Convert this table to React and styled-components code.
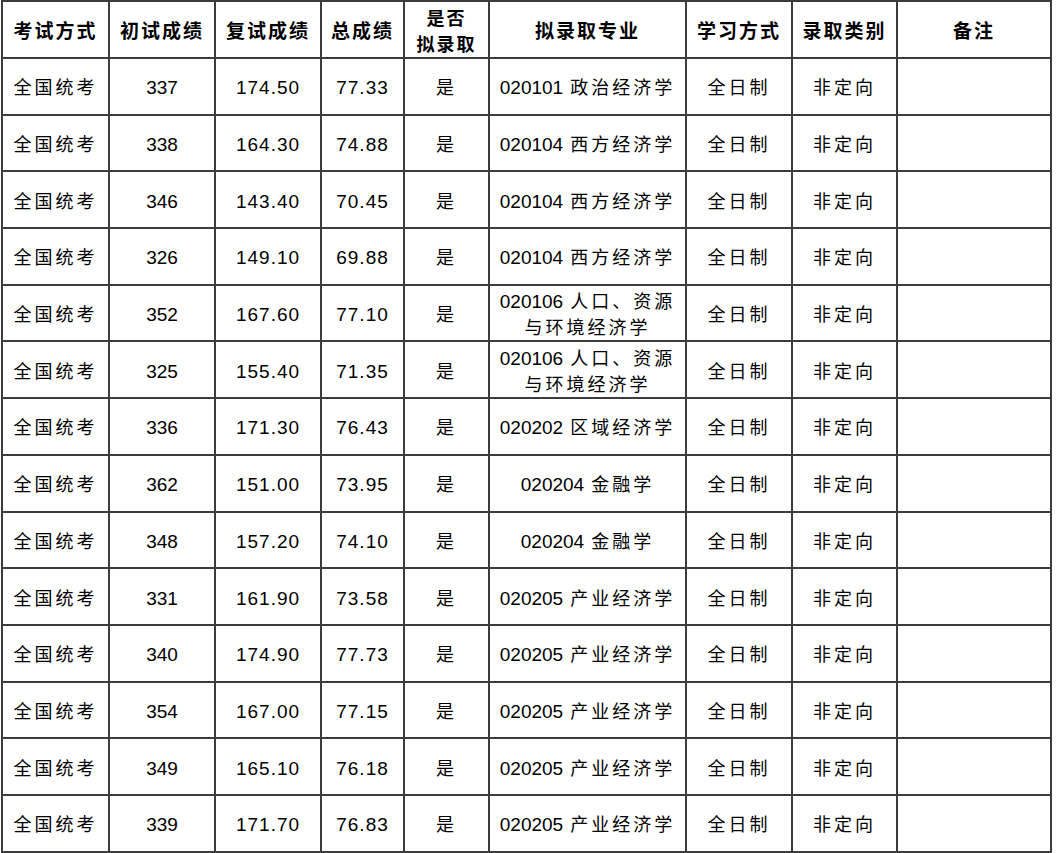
import styled, { createGlobalStyle } from "styled-components";

const GlobalStyle = createGlobalStyle`
  html, body {
    margin: 0;
    padding: 0;
    background: #fff;
  }
`;

const widths = [107, 106, 106, 83, 85, 197, 106, 105, 154];

const headers = [
  ["考试方式"],
  ["初试成绩"],
  ["复试成绩"],
  ["总成绩"],
  ["是否", "拟录取"],
  ["拟录取专业"],
  ["学习方式"],
  ["录取类别"],
  ["备注"],
];

const rows = [
  ["337", "174.50", "77.33", ["020101 政治经济学"]],
  ["338", "164.30", "74.88", ["020104 西方经济学"]],
  ["346", "143.40", "70.45", ["020104 西方经济学"]],
  ["326", "149.10", "69.88", ["020104 西方经济学"]],
  ["352", "167.60", "77.10", ["020106 人口、资源", "与环境经济学"]],
  ["325", "155.40", "71.35", ["020106 人口、资源", "与环境经济学"]],
  ["336", "171.30", "76.43", ["020202 区域经济学"]],
  ["362", "151.00", "73.95", ["020204 金融学"]],
  ["348", "157.20", "74.10", ["020204 金融学"]],
  ["331", "161.90", "73.58", ["020205 产业经济学"]],
  ["340", "174.90", "77.73", ["020205 产业经济学"]],
  ["354", "167.00", "77.15", ["020205 产业经济学"]],
  ["349", "165.10", "76.18", ["020205 产业经济学"]],
  ["339", "171.70", "76.83", ["020205 产业经济学"]],
];

// split a major like "020101 政治经济学" so the code uses the latin face
function Major({ lines }) {
  return lines.map((line, i) => {
    const m = line.match(/^(\d+)(.*)$/);
    return (
      <Line key={i}>
        {m ? (
          <>
            <Num>{m[1]}</Num>
            <Han>{m[2]}</Han>
          </>
        ) : (
          <Han>{line}</Han>
        )}
      </Line>
    );
  });
}

export default function App() {
  return (
    <>
      <GlobalStyle />
      <Page>
        <Table>
          <colgroup>
            {widths.map((w, i) => (
              <col key={i} style={{ width: w }} />
            ))}
          </colgroup>
          <thead>
            <tr>
              {headers.map((h, i) => (
                <Th key={i}>
                  {h.map((t, j) => (
                    <HeadLine key={j} $tight={h.length > 1}>
                      {t}
                    </HeadLine>
                  ))}
                </Th>
              ))}
            </tr>
          </thead>
          <tbody>
            {rows.map((r, i) => (
              <Row key={i}>
                <Td>
                  <Han>全国统考</Han>
                </Td>
                <Td>
                  <Num>{r[0]}</Num>
                </Td>
                <Td>
                  <Num $spaced>{r[1]}</Num>
                </Td>
                <Td>
                  <Num $spaced>{r[2]}</Num>
                </Td>
                <Td>
                  <Han>是</Han>
                </Td>
                <Td>
                  <Major lines={r[3]} />
                </Td>
                <Td>
                  <Han>全日制</Han>
                </Td>
                <Td>
                  <Han>非定向</Han>
                </Td>
                <Td />
              </Row>
            ))}
          </tbody>
        </Table>
      </Page>
    </>
  );
}

const Page = styled.div`
  padding: 0 0 0 1px;
  width: 1058px;
  height: 853px;
  box-sizing: border-box;
  overflow: hidden;
`;

const Table = styled.table`
  border-collapse: collapse;
  table-layout: fixed;
  width: 1051px;
  color: #000;
`;

const Th = styled.th`
  height: 55px;
  padding: 0;
  border: 2px solid #3c3c3c;
  text-align: center;
  vertical-align: middle;
  font-family: "Noto Sans CJK SC", sans-serif;
  font-weight: 700;
  font-size: 19px;
  letter-spacing: 2px;
`;

const HeadLine = styled.div`
  font-size: ${(p) => (p.$tight ? "18px" : "19px")};
  line-height: ${(p) => (p.$tight ? "26px" : "26px")};
`;

const Row = styled.tr`
  height: 56.7px;
`;

const Td = styled.td`
  padding: 0;
  border: 2px solid #3c3c3c;
  text-align: center;
  vertical-align: middle;
  font-family: "Noto Sans CJK SC", sans-serif;
  font-size: 18px;
  line-height: 26px;
`;

const Line = styled.div`
  white-space: nowrap;
  line-height: 26px;
  height: 26px;
`;

const Han = styled.span`
  font-family: "Noto Sans CJK SC", sans-serif;
  font-weight: 400;
  letter-spacing: 3px;
  line-height: 1;
`;

const Num = styled.span`
  font-family: "Liberation Sans", Arial, sans-serif;
  font-size: 19px;
  line-height: 1;
  letter-spacing: ${(p) => (p.$spaced ? "1px" : "0")};
`;
